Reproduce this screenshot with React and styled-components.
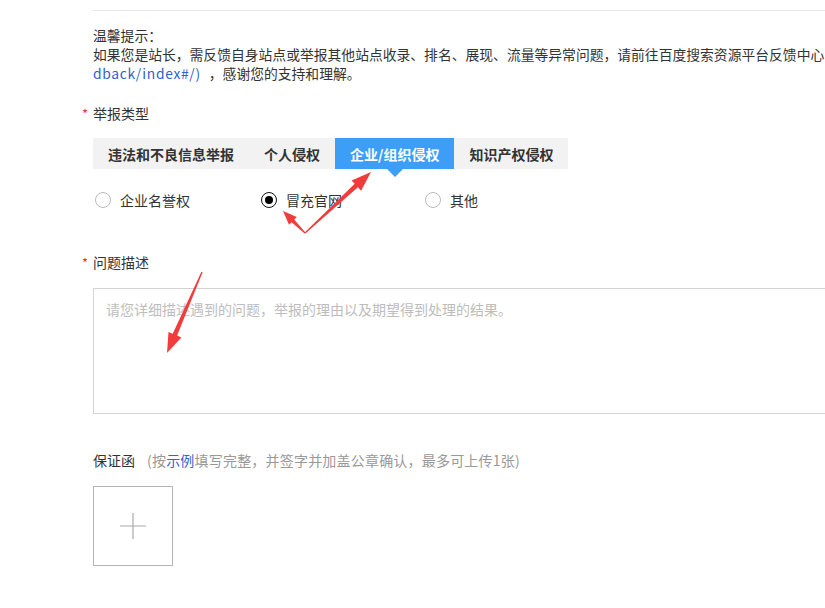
import React, { useState } from "react";
import styled, { createGlobalStyle } from "styled-components";

const GlobalStyle = createGlobalStyle`
  html, body {
    margin: 0;
    padding: 0;
    background: #fff;
    overflow: hidden;
  }
  body {
    font-family: "Microsoft YaHei", "Noto Sans CJK SC", "Noto Sans", sans-serif;
    color: #333;
  }
`;

const Page = styled.div`
  position: relative;
  width: 825px;
  height: 608px;
  overflow: hidden;
  padding-left: 93px;
  padding-top: 10px;
  box-sizing: border-box;
`;

const Divider = styled.div`
  height: 1px;
  background: #e6e6e6;
  margin-right: -10px;
`;

const Notice = styled.div`
  margin-top: 15px;
  font-size: 13.8px;
  line-height: 19px;
  color: #333;
  white-space: nowrap;
`;

const Link = styled.span`
  color: #2f5fd0;
  letter-spacing: 0.7px;
  margin-right: 8px;
`;

const FieldLabel = styled.div`
  position: relative;
  margin-top: ${({ $top }) => $top}px;
  font-size: 14px;
  line-height: 20px;
  color: #333;

  &::before {
    content: ${({ $required }) => ($required ? '"*"' : "none")};
    position: absolute;
    left: -11px;
    top: 1px;
    color: #e33;
    font-size: 13px;
  }
`;

const TabBar = styled.div`
  display: inline-flex;
  margin-top: 15px;
  background: #f2f2f2;
  height: 31px;
`;

const Tab = styled.button`
  position: relative;
  border: none;
  padding: 0 15px;
  height: 31px;
  font-family: inherit;
  font-size: 14px;
  font-weight: bold;
  cursor: pointer;
  background: ${({ $active }) => ($active ? "#3d9ef7" : "transparent")};
  color: ${({ $active }) => ($active ? "#fff" : "#333")};

  &::after {
    content: "";
    display: ${({ $active }) => ($active ? "block" : "none")};
    position: absolute;
    left: 50%;
    bottom: -8px;
    margin-left: -8px;
    border-left: 8px solid transparent;
    border-right: 8px solid transparent;
    border-top: 8px solid #3d9ef7;
  }
`;

const RadioRow = styled.div`
  display: grid;
  grid-template-columns: 166px 164px 120px;
  margin-top: 21px;
  padding-left: 2px;
`;

const RadioItem = styled.label`
  display: flex;
  align-items: center;
  gap: 9px;
  font-size: 14px;
  line-height: 20px;
  color: #333;
  cursor: pointer;
`;

const RadioDot = styled.span`
  width: 16px;
  height: 16px;
  box-sizing: border-box;
  border-radius: 50%;
  border: 1px solid ${({ $checked }) => ($checked ? "#111" : "#bbb")};
  display: flex;
  align-items: center;
  justify-content: center;

  &::after {
    content: "";
    width: 8px;
    height: 8px;
    border-radius: 50%;
    background: #000;
    display: ${({ $checked }) => ($checked ? "block" : "none")};
  }
`;

const TextArea = styled.textarea`
  display: block;
  margin-top: 16px;
  width: 760px;
  height: 126px;
  box-sizing: border-box;
  border: 1px solid #d4d4d4;
  padding: 10px 12px;
  resize: none;
  font-family: inherit;
  font-size: 14px;
  line-height: 20px;
  outline: none;

  &::placeholder {
    color: #bdbdbd;
  }
`;

const UploadHead = styled.div`
  display: flex;
  gap: 12px;
  margin-top: 36px;
  font-size: 14px;
  line-height: 20px;
`;

const Hint = styled.span`
  color: #999;
  letter-spacing: 0.2px;
`;

const HintLink = styled.span`
  color: #3563d4;
`;

const UploadBox = styled.div`
  margin-top: 16px;
  width: 80px;
  height: 80px;
  box-sizing: border-box;
  border: 1px solid #b5b5b5;
  display: flex;
  align-items: center;
  justify-content: center;
  color: #999;
`;

const Annotations = styled.svg`
  position: absolute;
  left: 0;
  top: 0;
  pointer-events: none;
`;

// tapered arrow from (x1,y1) to the tip at (x2,y2)
function arrowPoints(x1, y1, x2, y2, head = 18, headW = 7, shaft = 2.4) {
  const dx = x2 - x1;
  const dy = y2 - y1;
  const len = Math.hypot(dx, dy);
  const ux = dx / len;
  const uy = dy / len;
  const nx = -uy;
  const ny = ux;
  const bx = x2 - ux * head;
  const by = y2 - uy * head;
  const p = [
    [x1 + nx * 0.6, y1 + ny * 0.6],
    [bx + nx * shaft, by + ny * shaft],
    [bx + nx * headW, by + ny * headW],
    [x2, y2],
    [bx - nx * headW, by - ny * headW],
    [bx - nx * shaft, by - ny * shaft],
    [x1 - nx * 0.6, y1 - ny * 0.6],
  ];
  return p.map(([a, b]) => `${a.toFixed(1)},${b.toFixed(1)}`).join(" ");
}

const tabs = ["违法和不良信息举报", "个人侵权", "企业/组织侵权", "知识产权侵权"];
const options = ["企业名誉权", "冒充官网", "其他"];

export default function App() {
  const [tab, setTab] = useState(2);
  const [option, setOption] = useState(1);

  return (
    <>
      <GlobalStyle />
      <Page>
        <Divider />
        <Notice>
          温馨提示：
          <br />
          如果您是站长，需反馈自身站点或举报其他站点收录、排名、展现、流量等异常问题，请前往百度搜索资源平台反馈中心
          <br />
          <Link>dback/index#/)</Link>，感谢您的支持和理解。
        </Notice>

        <FieldLabel $top={20} $required>
          举报类型
        </FieldLabel>
        <TabBar>
          {tabs.map((t, i) => (
            <Tab key={t} $active={tab === i} onClick={() => setTab(i)}>
              {t}
            </Tab>
          ))}
        </TabBar>
        <RadioRow>
          {options.map((o, i) => (
            <RadioItem key={o} onClick={() => setOption(i)}>
              <RadioDot $checked={option === i} />
              {o}
            </RadioItem>
          ))}
        </RadioRow>

        <FieldLabel $top={42} $required>
          问题描述
        </FieldLabel>
        <TextArea placeholder="请您详细描述遇到的问题，举报的理由以及期望得到处理的结果。" />

        <UploadHead>
          <span>保证函</span>
          <Hint>
            (按<HintLink>示例</HintLink>填写完整，并签字并加盖公章确认，最多可上传1张)
          </Hint>
        </UploadHead>
        <UploadBox>
          <svg width="28" height="28" viewBox="0 0 28 28">
            <path d="M14 1v26M1 14h26" stroke="#aaa" strokeWidth="1.2" />
          </svg>
        </UploadBox>

        <Annotations width="825" height="608">
          <g fill="#f23b3b">
            <polygon points={arrowPoints(305, 233, 371, 172, 20, 7)} />
            <polygon points={arrowPoints(305, 233, 283, 211, 14, 5.5, 1.8)} />
            <polygon points={arrowPoints(202, 272, 167, 353, 20, 7)} />
          </g>
        </Annotations>
      </Page>
    </>
  );
}
